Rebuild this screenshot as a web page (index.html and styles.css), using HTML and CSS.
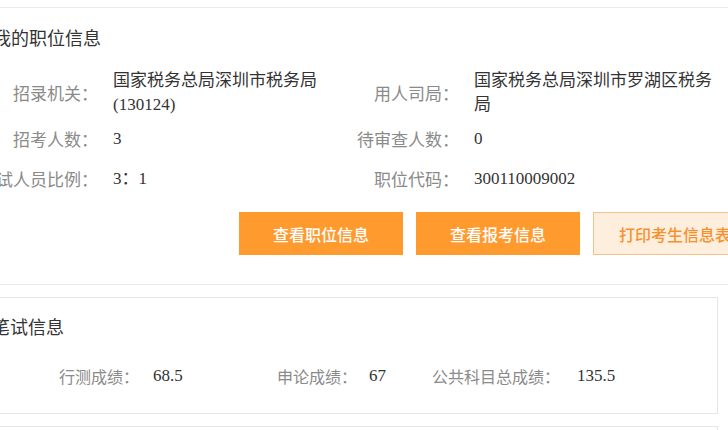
FILE: index.html
```html
<!DOCTYPE html>
<html lang="zh-CN">
<head>
<meta charset="utf-8">
<title>我的职位信息</title>
<link rel="stylesheet" href="styles.css">
</head>
<body>
<div class="page">
  <section class="card card-job">
    <h2 class="card-title">我的职位信息</h2>
    <div class="info-grid">
      <div class="label">招录机关：</div>
      <div class="value">国家税务总局深圳市税务局(130124)</div>
      <div class="label">用人司局：</div>
      <div class="value">国家税务总局深圳市罗湖区税务局</div>

      <div class="label">招考人数：</div>
      <div class="value">3</div>
      <div class="label">待审查人数：</div>
      <div class="value">0</div>

      <div class="label">面试人员比例：</div>
      <div class="value">3：1</div>
      <div class="label">职位代码：</div>
      <div class="value">300110009002</div>
    </div>
    <div class="actions">
      <button class="btn btn-primary" type="button">查看职位信息</button>
      <button class="btn btn-primary" type="button">查看报考信息</button>
      <button class="btn btn-light" type="button">打印考生信息表</button>
    </div>
  </section>

  <section class="card card-exam">
    <h2 class="card-title">笔试信息</h2>
    <div class="scores">
      <div class="score score-1"><span class="label">行测成绩：</span><span class="value">68.5</span></div>
      <div class="score score-2"><span class="label">申论成绩：</span><span class="value">67</span></div>
      <div class="score score-3"><span class="label">公共科目总成绩：</span><span class="value">135.5</span></div>
    </div>
  </section>

  <section class="card card-next"></section>
</div>
</body>
</html>
```

FILE: styles.css
```css
html, body {
  margin: 0;
  padding: 0;
  background: #ffffff;
}

body {
  font-family: "Noto Sans CJK SC", "Noto Sans", sans-serif;
  color: #333333;
  overflow: hidden;
}

.page {
  margin-left: -30px;
  width: 790px;
  display: flex;
  flex-direction: column;
}

.card {
  background: #ffffff;
  box-sizing: border-box;
}

.card-title {
  margin: 0;
  font-size: 18px;
  font-weight: normal;
  line-height: 24px;
  color: #333333;
  white-space: nowrap;
}

/* ---- job card ---- */
.card-job {
  margin-top: 7px;
  width: 790px;
  border-top: 1px solid #ebebeb;
  border-bottom: 1px solid #ebebeb;
  padding: 17px 0 29px 23px;
}

.info-grid {
  margin-top: 19px;
  display: grid;
  grid-template-columns: 105px 226px 105px 245px;
  grid-template-rows: 50px 42px 38px;
  column-gap: 15px;
  align-items: center;
}

.label {
  font-size: 16px;
  line-height: 24px;
  color: #8a8a8a;
  white-space: nowrap;
}

.info-grid .label {
  font-size: 17px;
  text-align: right;
  justify-self: end;
}

.value {
  font-family: "Liberation Serif", "Noto Sans CJK SC", serif;
  font-size: 17px;
  line-height: 24px;
  color: #333333;
}

.actions {
  margin-top: 14px;
  padding-left: 246px;
  display: flex;
  gap: 13px;
}

.btn {
  flex: none;
  width: 164px;
  height: 43px;
  box-sizing: border-box;
  border: 1px solid transparent;
  border-radius: 0;
  font-family: "Noto Sans CJK SC", sans-serif;
  font-size: 16px;
  font-weight: 500;
  padding: 0;
  cursor: pointer;
}

.btn-primary {
  background: #ff9a2f;
  border-color: #ff9a2f;
  color: #ffffff;
}

.btn-light {
  background: #fdeedd;
  border-color: #f5c08a;
  color: #f6922d;
}

/* ---- exam card ---- */
.card-exam {
  margin-top: 12px;
  width: 748px;
  border: 1px solid #e6e6e6;
  padding: 16px 0 25px 21px;
}

.scores {
  margin-top: 26px;
  padding-left: 67px;
  display: grid;
  grid-template-columns: 218px 155px auto;
  align-items: center;
}

.score {
  display: flex;
  align-items: center;
}

.score-1 .value { margin-left: 14px; }
.score-2 .value { margin-left: 12px; }
.score-3 .value { margin-left: 17px; }

/* ---- next card ---- */
.card-next {
  margin-top: 12px;
  width: 748px;
  height: 60px;
  border: 1px solid #e6e6e6;
}
```
